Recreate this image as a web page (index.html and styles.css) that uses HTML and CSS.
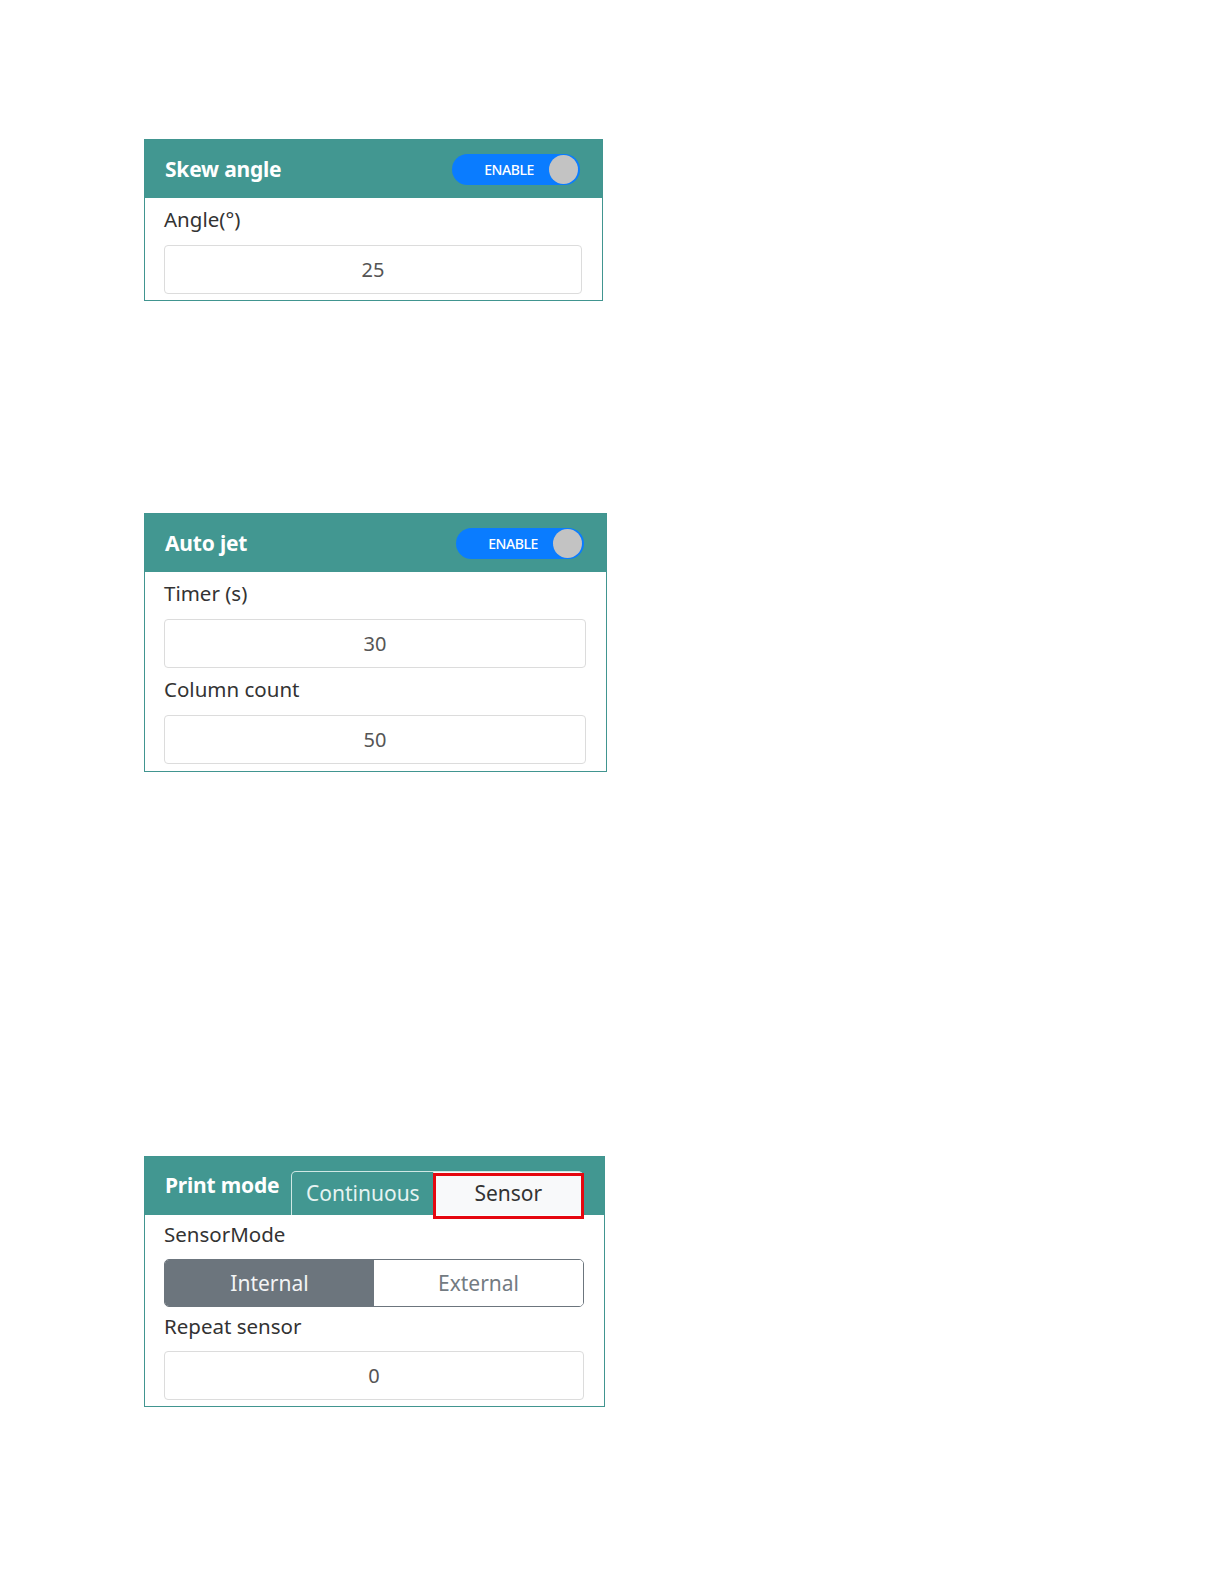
FILE: index.html
```html
<!DOCTYPE html>
<html lang="en-US">
<head>
   <meta charset="UTF-8"><title>settings</title>
   <link rel="stylesheet" href="styles.css">
</head> <body>

<main class="page">

<section class="card card-skew">
   <header class="card-head">
      <h2>Skew angle</h2>
      <label class="toggle"><span>ENABLE</span><i class="knob"></i></label>
   </header>
   <div class="card-body">
      <p class="field-label">Angle(°)</p>
      <input class="field" type="text" value="25">
   </div>
</section>

<section class="card card-jet">
   <header class="card-head">
      <h2>Auto jet</h2>
      <label class="toggle"><span>ENABLE</span><i class="knob"></i></label>
   </header>
   <div class="card-body">
      <p class="field-label">Timer (s)</p>
      <input class="field" type="text" value="30">
      <p class="field-label">Column count</p>
      <input class="field" type="text" value="50">
   </div>
</section>

<section class="card card-print">
   <header class="card-head head-tabs">
      <h2>Print mode</h2>
      <ul class="tabs">
         <li>Continuous</li>
         <li class="active">Sensor<b class="mark"></b></li>
      </ul>
   </header>
   <div class="card-body">
      <p class="field-label">SensorMode</p>
      <div class="segment">
         <button class="on">Internal</button>
         <button>External</button>
      </div>
      <p class="field-label">Repeat sensor</p>
      <input class="field" type="text" value="0">
   </div>
</section>

</main>

</body> </html>
```

FILE: styles.css
```css
body {
   margin: 0;
   font-family: "Noto Sans", "Open Sans", sans-serif;
   background: #fff;
}

.page {
   padding: 139px 0 0 144px;
   display: flex;
   flex-direction: column;
   align-items: flex-start;
}

.card {
   border: 1px solid #419590;
   box-sizing: border-box;
}

.card-skew { width: 459px; }
.card-jet { width: 463px; margin-top: 212px; }
.card-print { width: 461px; margin-top: 384px; }

.card-head {
   height: 58px;
   background: #429791;
   display: flex;
   align-items: center;
   justify-content: space-between;
   padding: 0 22px 0 20px;
}

.card-head h2 {
   margin: 0;
   color: #fff;
   font-size: 21px;
   font-weight: 700;
   letter-spacing: -0.2px;
}

.toggle {
   width: 128px;
   height: 31px;
   border-radius: 16px;
   background: #0a7cff;
   display: flex;
   align-items: center;
   justify-content: flex-end;
   gap: 15px;
   padding-right: 2px;
   box-sizing: border-box;
}

.toggle span {
   color: #fff;
   font-size: 14px;
   font-weight: 500;
   letter-spacing: -0.4px;
}

.knob {
   width: 29px;
   height: 29px;
   border-radius: 50%;
   background: #c3c3c3;
}

.card-body {
   padding: 0 20px 6px 19px;
}

.card-jet .card-body {
   padding-bottom: 7px;
}

.field-label {
   margin: 0;
   padding: 6px 0 11px;
   line-height: 30px;
   font-size: 20.5px;
   color: #333;
}

.card-print .field-label {
   padding: 4px 0 10px;
}

.field {
   display: block;
   width: 100%;
   height: 49px;
   box-sizing: border-box;
   border: 1px solid #dcdcdc;
   border-radius: 4px;
   text-align: center;
   font-family: inherit;
   font-size: 20px;
   color: #555;
   background: #fff;
   outline: none;
}

/* print mode tabs */
.head-tabs {
   justify-content: flex-start;
   align-items: flex-end;
   gap: 12px;
   padding-right: 0;
}

.head-tabs h2 {
   align-self: center;
   margin-top: -2px;
}

.tabs {
   list-style: none;
   margin: 0;
   padding: 0;
   display: flex;
   height: 44px;
}

.tabs li {
   font-size: 21px;
   line-height: 43px;
   color: #e6f3f1;
   text-align: center;
   border: 1px solid #cfe8e4;
   border-bottom: none;
   border-radius: 5px 0 0 0;
   width: 143px;
   box-sizing: border-box;
}

.tabs li.active {
   position: relative;
   width: 149px;
   background: #f8f9fa;
   color: #333;
   border-radius: 0 5px 0 0;
   border-left: none;
}

.mark {
   position: absolute;
   left: -1px;
   right: -2px;
   top: 1px;
   bottom: -4px;
   border: 3px solid #e5070f;
}

.segment {
   display: flex;
   height: 48px;
   box-sizing: border-box;
   border: 1px solid #6c757d;
   border-radius: 5px;
   overflow: hidden;
}

.segment button {
   flex: 0 0 50%;
   border: none;
   background: #fff;
   color: #737b82;
   font-family: inherit;
   font-size: 21px;
}

.segment button.on {
   background: #6c757d;
   color: #f3f4f5;
}
```
